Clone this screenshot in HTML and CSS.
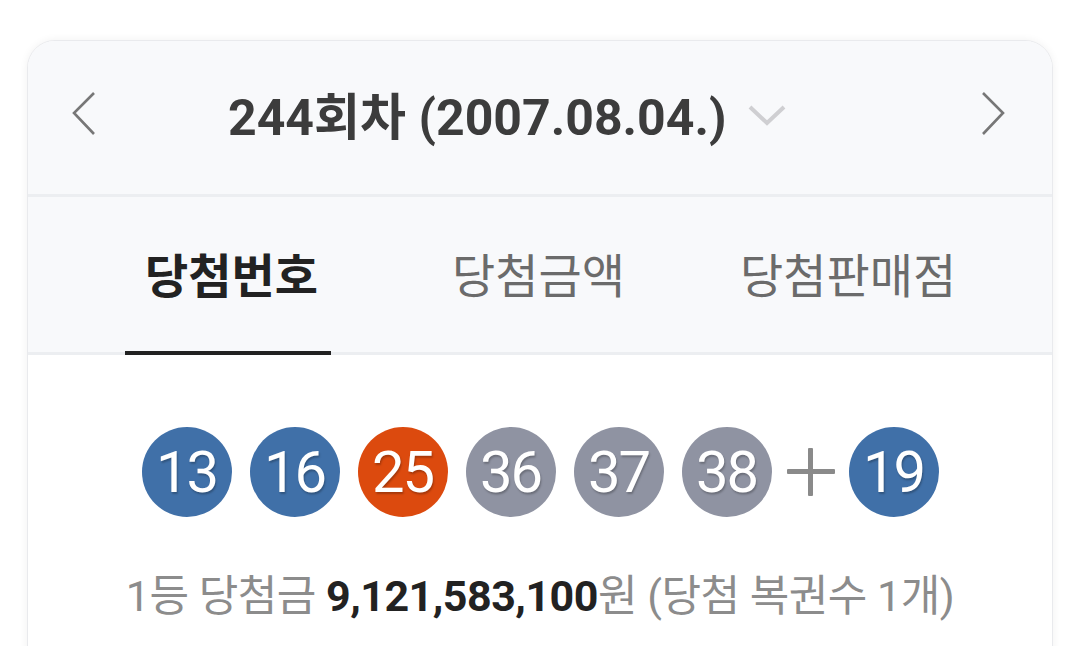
FILE: index.html
```html
<!DOCTYPE html>
<html lang="ko">
<head>
    <meta charset="UTF-8">
    <meta name="viewport" content="width=device-width, initial-scale=1.0">
    <title>당첨번호</title>
    <link rel="stylesheet" href="styles.css">
</head>
<body>

    <div class="card">
        <div class="round">
            <button class="arrow prev" aria-label="이전 회차">
                <svg width="30" height="46" viewBox="0 0 30 46"><path d="M25 3 L5 23 L25 44" fill="none" stroke="#777" stroke-width="2.6"/></svg>
            </button>
            <div class="round-title">
                <h1>244회차 (2007.08.04.)</h1>
                <svg class="caret" width="40" height="24" viewBox="0 0 40 24"><path d="M3 4 L20 20 L37 4" fill="none" stroke="#cfcfd2" stroke-width="4"/></svg>
            </div>
            <button class="arrow next" aria-label="다음 회차">
                <svg width="30" height="46" viewBox="0 0 30 46"><path d="M5 3 L25 23 L5 44" fill="none" stroke="#777" stroke-width="2.6"/></svg>
            </button>
        </div>

        <div class="tabs">
            <div class="tab active">당첨번호</div>
            <div class="tab">당첨금액</div>
            <div class="tab">당첨판매점</div>
        </div>

        <div class="result">
            <div class="balls">
                <span class="ball blue">13</span>
                <span class="ball blue">16</span>
                <span class="ball red">25</span>
                <span class="ball gray">36</span>
                <span class="ball gray">37</span>
                <span class="ball gray">38</span>
                <span class="plus"></span>
                <span class="ball blue">19</span>
            </div>
            <p class="prize">1등 당첨금 <strong>9,121,583,100</strong>원 (당첨 복권수 1개)</p>
        </div>
    </div>

</body>
</html>
```

FILE: styles.css
```css
html, body {
    height: 100%;
}

body {
    font-family: Roboto, "Noto Sans CJK KR", sans-serif;
    background-color: #ffffff;
    margin: 0;
    padding: 40px 27px 0 27px;
    box-sizing: border-box;
    overflow: hidden;
}

.card {
    background-color: #ffffff;
    border: 1px solid #e9eaed;
    border-radius: 28px;
    box-shadow: 0 0 8px rgba(0, 0, 0, 0.06);
    overflow: hidden;
    height: 700px;
}

.round {
    display: flex;
    align-items: center;
    box-sizing: border-box;
    height: 156px;
    background-color: #f8f9fb;
    border-bottom: 3px solid #eceef1;
    padding: 0 44px 9px 41px;
}

.arrow {
    background: none;
    border: none;
    padding: 0;
    width: 30px;
    height: 46px;
    display: flex;
}

.round-title {
    display: flex;
    align-items: center;
    margin-left: 129px;
}

h1 {
    margin: 0;
    font-size: 50px;
    font-weight: 700;
    color: #3c3c3c;
}

.caret {
    margin-left: 20px;
    margin-top: 4px;
}

.next {
    margin-left: auto;
}

.tabs {
    display: flex;
    height: 155px;
    background-color: #f8f9fb;
    border-bottom: 3px solid #eceef1;
    padding-left: 97px;
}

.tab {
    display: flex;
    align-items: center;
    justify-content: center;
    padding: 0 13px 4px 20px;
    font-size: 47px;
    color: #6b6b6b;
    margin-bottom: -3px;
    border-bottom: 4px solid transparent;
}

.tab + .tab {
    margin-left: 101px;
}

.tab:nth-child(3) {
    margin-left: 82px;
}

.tab.active {
    font-weight: 700;
    color: #222222;
    border-bottom-color: #222222;
}

.result {
    padding-top: 72px;
    text-align: center;
}

.balls {
    display: flex;
    justify-content: center;
    align-items: center;
    gap: 18px;
}

.ball {
    width: 90px;
    height: 90px;
    border-radius: 50%;
    display: flex;
    align-items: center;
    justify-content: center;
    color: #ffffff;
    font-size: 58px;
    letter-spacing: -2px;
    text-shadow: 1px 2px 2px rgba(0, 0, 0, 0.25);
}

.blue {
    background-color: #4070a8;
}

.red {
    background-color: #dc4a0e;
}

.gray {
    background-color: #8f93a2;
}

.plus {
    position: relative;
    width: 48px;
    height: 48px;
    margin: 0 -4px 0 -3px;
}

.plus::before,
.plus::after {
    content: "";
    position: absolute;
    background-color: #8a8a8a;
    border-radius: 1px;
}

.plus::before {
    left: 0;
    right: 0;
    top: 21px;
    height: 5px;
}

.plus::after {
    top: 0;
    bottom: 0;
    left: 21px;
    width: 5px;
}

.prize {
    margin: 44px 0 0 0;
    font-size: 43px;
    color: #8c8c8c;
    letter-spacing: -0.5px;
}

.prize strong {
    color: #222222;
    font-weight: 700;
}
```
